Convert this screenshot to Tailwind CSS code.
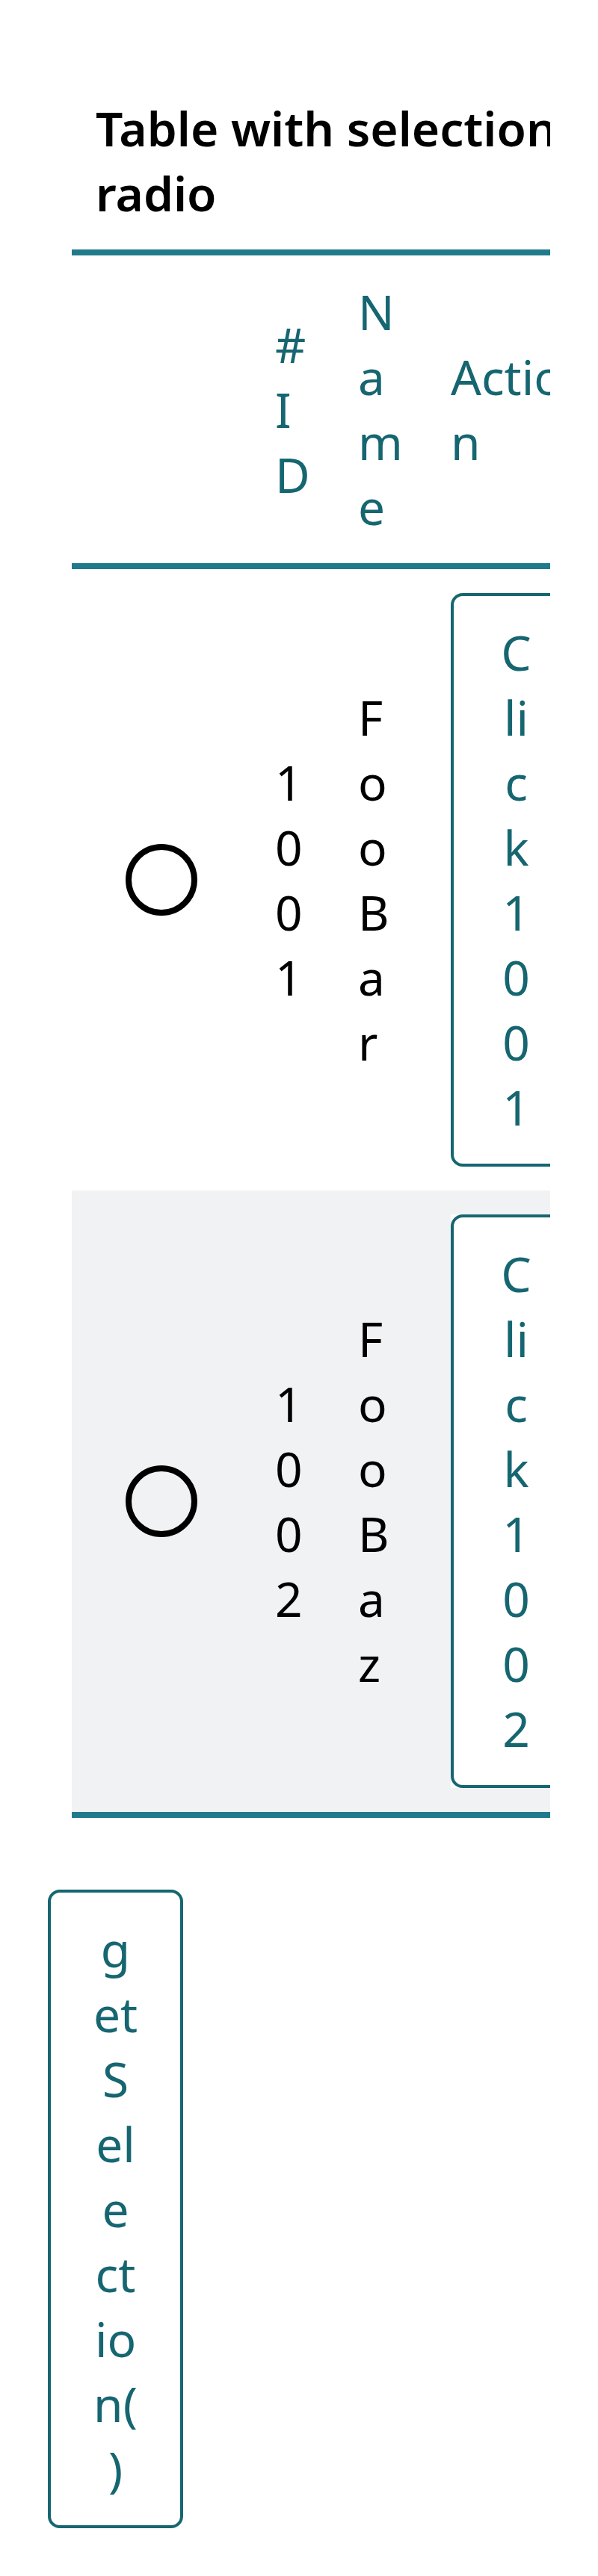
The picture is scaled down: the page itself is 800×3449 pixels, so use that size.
<!DOCTYPE html>
<html lang="en">
<head>
<meta charset="utf-8">
<meta name="viewport" content="width=device-width, initial-scale=1">
<title>Table with selection radio</title>
<script src="https://cdn.jsdelivr.net/npm/@tailwindcss/browser@4"></script>
</head>
<body class="bg-white p-16 font-['Noto_Sans',sans-serif] text-[64px] leading-[87px] text-black">
<main class="flex flex-col items-start gap-16">
  <div class="w-full overflow-hidden py-8 pl-8">
    <table class="w-[714px] table-fixed border-collapse border-spacing-0 text-left wrap-anywhere">
      <caption class="px-8 pt-8 pb-8 text-left font-semibold">Table with selection radio</caption>
      <colgroup>
        <col class="w-[240px]"><col class="w-[111px]"><col class="w-[124px]"><col>
      </colgroup>
      <thead class="text-[#166671]">
        <tr>
          <td class="p-0" colspan="4"><div class="h-2 bg-[#217a8c]"></div></td>
        </tr>
        <tr>
          <td class="p-8"></td>
          <th scope="col" class="p-8 font-normal">#ID</th>
          <th scope="col" class="p-8 font-normal">Name</th>
          <th scope="col" class="p-8 font-normal">Action</th>
        </tr>
        <tr>
          <td class="p-0" colspan="4"><div class="h-2 bg-[#217a8c]"></div></td>
        </tr>
      </thead>
      <tbody>
        <tr>
          <td class="py-8 pl-18"><input type="radio" name="row" aria-label="Select 1001" class="block size-24 appearance-none rounded-full border-8 border-black checked:bg-black"></td>
          <td class="p-8">1001</td>
          <td class="p-8">Foo Bar</td>
          <td class="p-8"><div class="w-[175px] bg-white"><button type="button" class="block w-full rounded-2xl border-4 border-[#166671] px-14 py-8 text-center text-[#166671] wrap-anywhere">Click 1001</button></div></td>
        </tr>
        <tr class="bg-[#f1f2f4]">
          <td class="py-8 pl-18"><input type="radio" name="row" aria-label="Select 1002" class="block size-24 appearance-none rounded-full border-8 border-black checked:bg-black"></td>
          <td class="p-8">1002</td>
          <td class="p-8">Foo Baz</td>
          <td class="p-8"><div class="w-[175px] bg-white"><button type="button" class="block w-full rounded-2xl border-4 border-[#166671] px-14 py-8 text-center text-[#166671] wrap-anywhere">Click 1002</button></div></td>
        </tr>
      </tbody>
      <tfoot>
        <tr>
          <td class="p-0" colspan="4"><div class="h-2 bg-[#217a8c]"></div></td>
        </tr>
      </tfoot>
    </table>
  </div>
  <button type="button" class="w-[181px] rounded-2xl border-4 border-[#166671] px-14 py-8 text-center text-[#166671] wrap-anywhere">getSelection()</button>
</main>
</body>
</html>
